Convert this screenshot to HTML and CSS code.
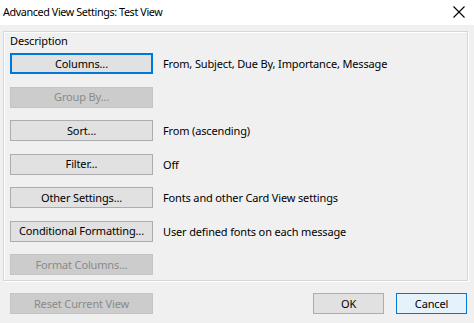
FILE: index.html
```html
<!DOCTYPE html>
<html>
<head>
<meta charset="utf-8">
<link rel="stylesheet" href="styles.css">
</head>
<body>
<div class="dialog">
  <div class="titlebar">
    <span class="title">Advanced View Settings: Test View</span>
    <svg class="close" width="12" height="12" viewBox="0 0 12 12"><path d="M0.5 0.5 L11.5 11.5 M11.5 0.5 L0.5 11.5" stroke="#000" stroke-width="1.1" fill="none"/></svg>
  </div>
  <div class="body">
    <div class="group">
      <div class="legend">Description</div>
      <div class="rows">
        <div class="row"><button class="btn focus">Columns...</button><span class="desc">From, Subject, Due By, Importance, Message</span></div>
        <div class="row"><button class="btn disabled">Group By...</button><span class="desc"></span></div>
        <div class="row"><button class="btn">Sort...</button><span class="desc">From (ascending)</span></div>
        <div class="row"><button class="btn">Filter...</button><span class="desc">Off</span></div>
        <div class="row"><button class="btn">Other Settings...</button><span class="desc">Fonts and other Card View settings</span></div>
        <div class="row"><button class="btn">Conditional Formatting...</button><span class="desc">User defined fonts on each message</span></div>
        <div class="row"><button class="btn disabled">Format Columns...</button><span class="desc"></span></div>
      </div>
    </div>
    <div class="footer">
      <button class="btn disabled">Reset Current View</button>
      <div class="actions">
        <button class="btn small">OK</button>
        <button class="btn small default">Cancel</button>
      </div>
    </div>
  </div>
</div>
</body>
</html>
```
FILE: styles.css
```css
html, body {
  margin: 0;
  padding: 0;
}
body {
  width: 474px;
  height: 323px;
  background: #f0f0f0;
  font-family: "Noto Sans", "Open Sans", sans-serif;
  font-size: 11px;
  letter-spacing: -0.15px;
  color: #000;
  overflow: hidden;
}
.dialog {
  width: 474px;
  height: 323px;
  display: flex;
  flex-direction: column;
}
.titlebar {
  height: 25px;
  background: #fff;
  display: flex;
  align-items: center;
  justify-content: space-between;
  padding: 0 9px 2px 3px;
  box-sizing: border-box;
}
.title {
  font-size: 10.8px;
  letter-spacing: -0.4px;
  color: #000;
}
.close {
  display: block;
}
.body {
  flex: 1;
  display: flex;
  flex-direction: column;
  padding: 6px 6px 0 3px;
}
.group {
  height: 250px;
  box-sizing: border-box;
  border: 1px solid #d6d6d6;
  box-shadow: 1px 1px 0 #fff, inset 1px 1px 0 #fff;
  padding: 0 0 0 6px;
}
.legend {
  height: 16px;
  line-height: 16px;
  margin-top: 1px;
}
.rows {
  display: flex;
  flex-direction: column;
  gap: 12.5px;
  margin-top: 4px;
}
.row {
  display: flex;
  align-items: center;
  gap: 10px;
}
.btn {
  font-family: inherit;
  font-size: 11px;
  letter-spacing: inherit;
  color: #000;
  width: 143px;
  height: 21px;
  padding: 0;
  margin: 0;
  box-sizing: border-box;
  background: #e1e1e1;
  border: 1px solid #adadad;
  border-radius: 0;
  line-height: 18px;
  flex: none;
}
.btn.focus {
  border: 2px solid #0078d7;
  line-height: 16px;
}
.btn.disabled {
  background: #cccccc;
  border-color: #c4c4c4;
  color: #8a8a8a;
}
.btn.small {
  width: 71px;
}
.btn.default {
  background: #e5f1fb;
  border-color: #0078d7;
}
.desc {
  white-space: nowrap;
}
.footer {
  display: flex;
  justify-content: space-between;
  align-items: center;
  margin-top: 12px;
  padding-left: 7px;
}
.actions {
  display: flex;
  gap: 12px;
  padding-right: 1px;
}
```
